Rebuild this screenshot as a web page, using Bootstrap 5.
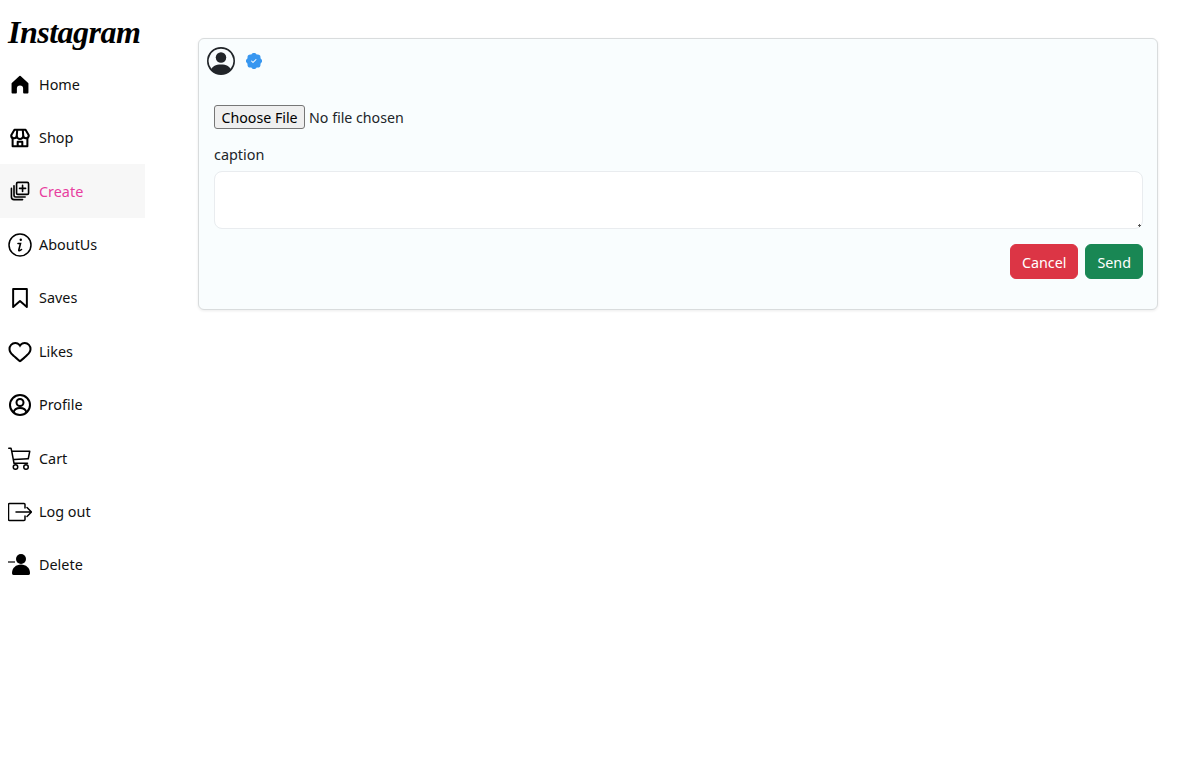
<!DOCTYPE html>
<html lang="en">
<head>
    <meta charset="UTF-8">
    <meta name="viewport" content="width=device-width, initial-scale=1.0">
    <title>Instagram - Create</title>
    <link href="https://cdn.jsdelivr.net/npm/bootstrap@5.3.0/dist/css/bootstrap.min.css" rel="stylesheet">
    <style>
        body { font-family: "Noto Sans", "Open Sans", sans-serif; color: #212529; }
        .side-bar { width: 145px; flex-shrink: 0; }
        .brand-logo { font-family: "Liberation Serif", serif; font-style: italic; font-weight: 700; font-size: 32px; line-height: 50px; height: 57.5px; padding: 7px 0 0 8px; color: #000; letter-spacing: -.5px; white-space: nowrap; }
        .side-link { height: 53.4px; padding: 1px 0 0 8px; color: #111; font-size: 14.4px; text-decoration: none; }
        .side-link:hover { color: #111; }
        .side-link.is-active { background: #f7f7f7; color: #e83e9f; }
        .side-icon { width: 24px; height: 24px; flex-shrink: 0; margin-right: 7px; }
        .post-panel { width: 960px; height: 272px; margin: 38px 0 0 53px; background: #f9fdfe; border: 1px solid #d9dcdd; border-radius: 6px; box-shadow: 0 1px 3px rgba(0,0,0,.08); }
        .panel-head { padding: 8px 0 0 8px; }
        .panel-form { padding: 30px 14px 0 15px; font-size: 14.4px; }
        .panel-form input[type=file] { font-family: "Noto Sans", sans-serif; font-size: 14.2px; height: 24px; }
        .panel-form input[type=file]::file-selector-button { height: 24px; padding: 1px 6.500px 0; margin-right: 4px; background: #efefef; border: 1px solid #767676; border-radius: 3px; }
        .caption-input { height: 58px; border-color: #e9ecef; border-radius: 8px; }
        .caption-input::-webkit-resizer { background: linear-gradient(#555, #555) right 1px bottom 2px/3px 1px no-repeat, linear-gradient(#555, #555) right 2px bottom 1px/1px 3px no-repeat; }
        .caption-label { margin: 16px 0 6px; line-height: 20px; }
        .panel-actions { gap: 7px; margin-top: 15px; }
        .panel-btn { font-size: 14.3px; height: 35px; padding: 2px 11px 0; border-radius: 6px; }
        .badge-mark { margin-left: 11px; }
    </style>
</head>
<body>
    <div class="d-flex">
        <nav class="side-bar d-flex flex-column">
            <div class="brand-logo">Instagram</div>
            <a href="#" class="side-link d-flex align-items-center">
                <svg class="side-icon" viewBox="-1.500 -1.500 27 27" fill="#000"><path d="M20.500 21.500h-4a1 1 0 0 1-1-1v-4.500a3.500 3.500 0 0 0-7 0v4.500a1 1 0 0 1-1 1h-4a1 1 0 0 1-1-1V10.500a1 1 0 0 1 .3-.7l8.500-7.800a1 1 0 0 1 1.400 0l8.500 7.800a1 1 0 0 1 .3.7v10a1 1 0 0 1-1 1Z"/></svg>
                Home
            </a>
            <a href="#" class="side-link d-flex align-items-center">
                <svg class="side-icon" viewBox="-1 -1 26 26" fill="none" stroke="#000" stroke-width="2.200" stroke-linejoin="round"><path d="M6 3h12l3.500 6a3 3 0 0 1-6 .5 3.500 3.500 0 0 1-7 0 3 3 0 0 1-6-.5Z"/><path d="M9 3 8.500 9.500M15 3l.5 6.500"/><path d="M4 12v9h16v-9"/><path d="M9.500 21v-5h5v5"/></svg>
                Shop
            </a>
            <a href="#" class="side-link is-active d-flex align-items-center">
                <svg class="side-icon" viewBox="-2 -2 28 28" fill="none" stroke="#000" stroke-width="1.900" stroke-linecap="round" stroke-linejoin="round"><rect x="8" y="2" width="14" height="14" rx="1.500"/><path d="M15 5.500v7M11.500 9h7"/><path d="M5 6v11a2 2 0 0 0 2 2h11"/><path d="M2 9v10a3 3 0 0 0 3 3h10"/></svg>
                Create
            </a>
            <a href="#" class="side-link d-flex align-items-center">
                <svg class="side-icon" viewBox="0 0 24 24" fill="none" stroke="#000" stroke-width="1.500"><circle cx="12" cy="12" r="11"/><circle cx="12.800" cy="6.800" r="1.200" fill="#000" stroke="none"/><path stroke-width="1.600" stroke-linecap="round" d="M10 10.500h2.500L10.800 17c-.2 1 .8 1.200 2.700-.5"/></svg>
                AboutUs
            </a>
            <a href="#" class="side-link d-flex align-items-center">
                <svg class="side-icon" viewBox="-2 -2 28 28" fill="none" stroke="#000" stroke-width="2.300" stroke-linejoin="round"><path d="M20 22.500 12 15.500 4 22.500V1.500h16Z"/></svg>
                Saves
            </a>
            <a href="#" class="side-link d-flex align-items-center">
                <svg class="side-icon" viewBox="0 0 24 24" fill="#000"><path d="M16.792 3.904A4.989 4.989 0 0 1 21.500 9.122c0 3.072-2.652 4.959-5.197 7.222-2.512 2.243-3.865 3.469-4.303 3.752-.477-.309-2.143-1.823-4.303-3.752C5.141 14.072 2.500 12.167 2.500 9.122a4.989 4.989 0 0 1 4.708-5.218 4.210 4.210 0 0 1 3.675 1.941c.84 1.175.98 1.763 1.120 1.763s.278-.588 1.110-1.766a4.170 4.170 0 0 1 3.679-1.938m0-2a6.040 6.040 0 0 0-4.797 2.127 6.052 6.052 0 0 0-4.787-2.127A6.985 6.985 0 0 0 .5 9.122c0 3.610 2.550 5.827 5.015 7.970.283.246.569.494.853.747l1.027.918a44.998 44.998 0 0 0 3.518 3.018 2 2 0 0 0 2.174 0 45.263 45.263 0 0 0 3.626-3.115l.922-.824c.293-.26.59-.519.885-.774 2.334-2.025 4.980-4.320 4.980-7.940a6.985 6.985 0 0 0-6.708-7.218Z"/></svg>
                Likes
            </a>
            <a href="#" class="side-link d-flex align-items-center">
                <svg class="side-icon" viewBox="0 0 24 24" fill="none" stroke="#000" stroke-width="2"><circle cx="12" cy="12" r="10"/><circle cx="12" cy="9.500" r="3.500"/><path d="M5.500 19.500c.7-3 3-4.500 6.500-4.500s5.800 1.500 6.500 4.500"/></svg>
                Profile
            </a>
            <a href="#" class="side-link d-flex align-items-center">
                <svg class="side-icon" viewBox="0 0 16 16" fill="#000"><path d="M0 1.500A.5.5 0 0 1 .5 1H2a.5.5 0 0 1 .485.379L2.890 3H14.500a.5.5 0 0 1 .49.598l-1 5a.5.5 0 0 1-.465.401l-9.397.472L4.415 11H13a.5.5 0 0 1 0 1H4a.5.5 0 0 1-.491-.408L2.010 3.607 1.610 2H.5a.5.5 0 0 1-.5-.5zM3.102 4l.84 4.479 9.144-.459L13.890 4H3.102zM5 12a2 2 0 1 0 0 4 2 2 0 0 0 0-4zm7 0a2 2 0 1 0 0 4 2 2 0 0 0 0-4zm-7 1a1 1 0 1 1 0 2 1 1 0 0 1 0-2zm7 0a1 1 0 1 1 0 2 1 1 0 0 1 0-2z"/></svg>
                Cart
            </a>
            <a href="#" class="side-link d-flex align-items-center">
                <svg class="side-icon" viewBox="0 0 24 24" fill="none" stroke="#000" stroke-width="1.500" stroke-linecap="round" stroke-linejoin="round"><path d="M17 8V4.500a1 1 0 0 0-1-1H1.500a1 1 0 0 0-1 1v15a1 1 0 0 0 1 1H16a1 1 0 0 0 1-1V16"/><path d="M8 12h15.500M19 7.500l4.500 4.500-4.500 4.500"/></svg>
                Log out
            </a>
            <a href="#" class="side-link d-flex align-items-center">
                <svg class="side-icon" viewBox="0 0 24 24" fill="#000"><circle cx="13" cy="6" r="5"/><path d="M4 20c0-5 4-8.500 9-8.500s9 3.500 9 8.500c0 1.300-.5 2-1.500 2h-15C4.500 22 4 21.300 4 20Z"/><path d="M0 9h7" stroke="#000" stroke-width="1.200"/></svg>
                Delete
            </a>
        </nav>
        <main class="flex-grow-1">
            <div class="post-panel">
                <div class="panel-head d-flex align-items-center">
                    <svg width="28" height="28" viewBox="0 0 16 16" fill="#212529"><path d="M11 6a3 3 0 1 1-6 0 3 3 0 0 1 6 0z"/><path fill-rule="evenodd" d="M0 8a8 8 0 1 1 16 0A8 8 0 0 1 0 8zm8-7a7 7 0 0 0-5.468 11.370C3.242 11.226 4.805 10 8 10s4.757 1.225 5.468 2.370A7 7 0 0 0 8 1z"/></svg>
                    <svg class="badge-mark" width="16" height="16" viewBox="0 0 16 16"><circle cx="8" cy="8" r="5" fill="#fff"/><path fill="#3897f0" d="M10.067.87a2.890 2.890 0 0 0-4.134 0l-.622.638-.89-.011a2.890 2.890 0 0 0-2.924 2.924l.01.89-.636.622a2.890 2.890 0 0 0 0 4.134l.637.622-.011.89a2.890 2.890 0 0 0 2.924 2.924l.89-.01.622.636a2.890 2.890 0 0 0 4.134 0l.622-.637.89.011a2.890 2.890 0 0 0 2.924-2.924l-.01-.89.636-.622a2.890 2.890 0 0 0 0-4.134l-.637-.622.011-.89a2.890 2.890 0 0 0-2.924-2.924l-.89.01-.622-.636zm.287 5.984-3 3a.5.5 0 0 1-.708 0l-1.500-1.500a.5.5 0 1 1 .708-.708L7 8.793l2.646-2.647a.5.5 0 0 1 .708.708z"/></svg>
                </div>
                <form class="panel-form">
                    <input type="file" class="d-block">
                    <label class="caption-label d-block" for="caption">caption</label>
                    <textarea id="caption" class="form-control caption-input"></textarea>
                    <div class="panel-actions d-flex justify-content-end">
                        <button type="button" class="btn btn-danger panel-btn">Cancel</button>
                        <button type="submit" class="btn btn-success panel-btn">Send</button>
                    </div>
                </form>
            </div>
        </main>
    </div>
    <script src="https://cdn.jsdelivr.net/npm/bootstrap@5.3.0/dist/js/bootstrap.bundle.min.js"></script>
</body>
</html>
